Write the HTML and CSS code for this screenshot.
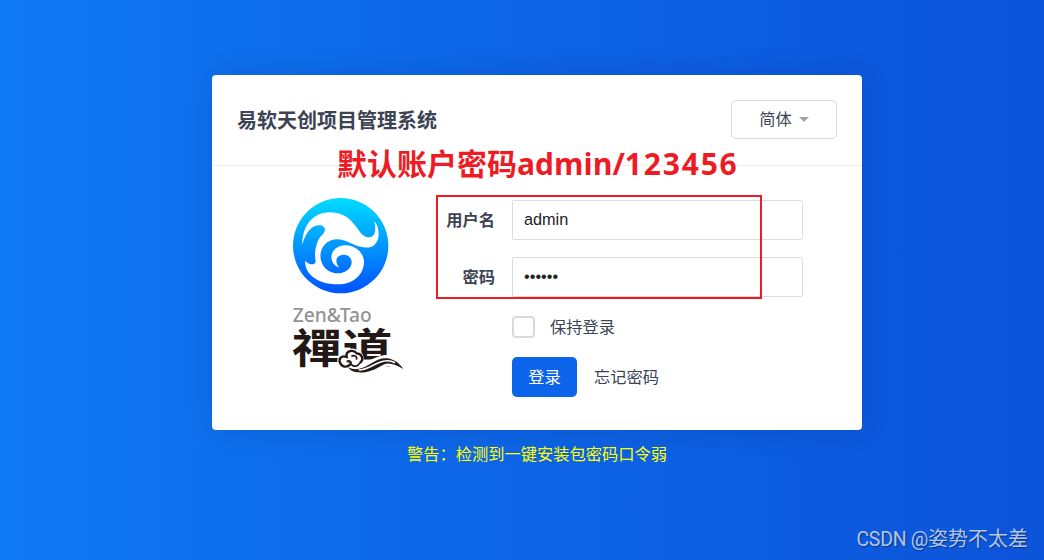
FILE: index.html
```
<!DOCTYPE html>
<html lang="zh-CN">
<head>
	<meta charset="utf-8">
	<title>用户登录</title>
	<link rel="stylesheet" href="styles.css">
</head>
<body>
	<div class="container">
		<div class="login-panel">
			<header>
				<h2>易软天创项目管理系统</h2>
				<button class="lang" type="button">简体<span class="caret"></span></button>
			</header>
			<div class="content">
				<svg class="logo" viewBox="0 0 390 570">
					<defs>
						<linearGradient id="sky" x1="0" y1="0" x2="0" y2="1">
							<stop offset="0" stop-color="#00dcff"/>
							<stop offset="1" stop-color="#0052ff"/>
						</linearGradient>
					</defs>
					<circle cx="182" cy="167" r="143" fill="url(#sky)"/>
					<path fill="#fff" d="M67 165C66 112 95 68 148 67C194 66 216 92 235 119C248 138 259 144 272 141C289 136 287 114 283 93C297 108 303 145 284 164C268 180 238 171 216 161C190 149 165 140 142 157C119 175 116 203 129 226C144 251 180 258 203 240C223 224 217 196 193 194C170 193 161 214 178 233C149 224 145 185 174 171C208 155 252 179 252 216C251 255 219 283 174 283C120 283 75 258 75 212C88 225 106 228 107 213C102 190 107 151 129 132C141 119 133 105 116 106C91 108 75 133 67 165Z"/>
					<text class="brand-en" x="38" y="396" textLength="237" lengthAdjust="spacingAndGlyphs">Zen&amp;Tao</text>
					<text class="brand-zh" transform="translate(36 520) scale(1 .82)" textLength="302" lengthAdjust="spacingAndGlyphs">禪道</text>
					<!-- cloud with its trailing wisp -->
					<path fill="#fff" stroke="#fff" stroke-width="14" d="M180 520C175 502 187 496 200 501C196 482 220 477 230 490C246 491 247 510 239 519C264 529 285 505 315 502C340 502 356 515 369 535C340 522 325 517 306 528C275 548 229 551 207 534C194 536 184 531 180 520Z"/>
					<path fill="#fff" stroke="#231815" stroke-width="7" d="M239 519C255 508 244 490 230 490C220 477 196 482 200 501C184 495 175 506 180 518C184 531 200 534 210 524C216 516 207 510 201 516"/>
					<path fill="none" stroke="#231815" stroke-width="5" d="M214 499C223 493 233 500 229 509M213 522C220 533 235 529 239 519"/>
					<path fill="#231815" d="M205 532C224 542 247 538 269 523C292 507 310 502 329 506C348 511 361 523 370 537C346 523 327 516 310 524C285 539 260 550 232 547C219 546 209 541 205 532Z"/>
					<path fill="none" stroke="#fff" stroke-width="5" d="M236 540C267 540 284 517 314 513C326 511 337 514 345 518"/>
				</svg>
				<form class="form">
					<label for="account">用户名</label>
					<input type="text" id="account" value="admin">
					<label for="password">密码</label>
					<input type="password" id="password" value="123456">
					<div class="keep">
						<input type="checkbox" id="keepLogin">
						<label for="keepLogin">保持登录</label>
					</div>
					<div class="actions">
						<button class="submit" type="button">登录</button>
						<a>忘记密码</a>
					</div>
				</form>
			</div>
		</div>
		<p class="warning">警告：检测到一键安装包密码口令弱</p>
	</div>
	<div class="note">默认账户密码<span>admin/</span><span class="digits">123456</span></div>
	<div class="highlight"></div>
	<div class="watermark"><span>CSDN @</span>姿势不太差</div>
</body>
</html>
```
FILE: styles.css
```
* {
	box-sizing: border-box;
}
body {
	margin: 0;
	height: 560px;
	position: relative;
	overflow: hidden;
	font-family: "Liberation Sans", "Noto Sans CJK SC", sans-serif;
	font-size: 16.25px;
	line-height: 24px;
	color: #3c4353;
	background: linear-gradient(90deg, #0f78f4 0%, #0d64e6 50%, #0c54da 100%);
}
.container {
	width: 650px;
	margin-left: 212px;
	padding-top: 75px;
}
.login-panel {
	height: 355px;
	background-color: #fff;
	border-radius: 4px;
	box-shadow: 0 0 30px rgba(0, 0, 0, 0.12);
}
header {
	display: flex;
	align-items: center;
	justify-content: space-between;
	height: 91px;
	padding: 0 25px 2px;
	border-bottom: 1px solid #eee;
}
h2 {
	margin: 0;
	padding-top: 3px;
	font-size: 20px;
	font-weight: bold;
}
button {
	display: flex;
	align-items: center;
	justify-content: center;
	padding: 0;
	font: inherit;
	border-radius: 5px;
}
.lang {
	width: 106px;
	height: 39px;
	gap: 7px;
	color: #3c4353;
	background-color: #fff;
	border: 1px solid #d8dbe2;
}
.caret {
	border: 5px solid transparent;
	border-top-color: #9ea3ad;
	border-bottom: 0;
}
.content {
	display: flex;
	padding: 24px 0 0 68px;
}
.logo {
	width: 130px;
	height: 190px;
}
.brand-en {
	font-family: "Noto Sans", sans-serif;
	font-size: 60px;
	font-weight: 500;
	fill: #929292;
}
.brand-zh {
	font-family: "Noto Sans CJK TC", sans-serif;
	font-size: 151px;
	font-weight: bold;
	fill: #231815;
}
.form {
	display: grid;
	grid-template-columns: 85px 291px;
	grid-template-rows: 40px 40px 26px 40px;
	column-gap: 17px;
	row-gap: 17px;
	align-items: center;
	align-content: start;
	padding-top: 10px;
}
.form > label {
	text-align: right;
	font-weight: bold;
}
input[type="text"],
input[type="password"] {
	width: 291px;
	height: 40px;
	margin: 0;
	padding: 0 11px 2px;
	font: inherit;
	color: #222;
	border: 1px solid #dcdcdc;
	border-radius: 2px;
	outline: none;
}
.keep,
.actions {
	grid-column: 2;
	display: flex;
	align-items: center;
}
.keep {
	gap: 15px;
}
input[type="checkbox"] {
	appearance: none;
	width: 23px;
	height: 22px;
	margin: 0;
	border: 2px solid #d9d9d9;
	border-radius: 4px;
}
.actions {
	gap: 17px;
}
.submit {
	width: 65px;
	height: 40px;
	color: #fff;
	background-color: #0c64eb;
	border: none;
}
.warning {
	margin: 12px 0 0;
	text-align: center;
	color: #ff0;
}
.note {
	position: absolute;
	left: 337px;
	top: 144px;
	font-size: 30px;
	line-height: 40px;
	font-weight: bold;
	white-space: nowrap;
	color: #ed1c24;
}
.note span {
	font-family: "Open Sans", sans-serif;
}
.note .digits {
	letter-spacing: 1.8px;
}
.highlight {
	position: absolute;
	left: 436px;
	top: 195px;
	width: 326px;
	height: 104px;
	border: 2px solid #ed1c24;
	pointer-events: none;
}
.watermark {
	position: absolute;
	right: 16px;
	bottom: 8px;
	font-size: 20px;
	white-space: nowrap;
	color: rgba(255, 255, 255, 0.7);
	text-shadow: 1px 1px 1px rgba(0, 0, 0, 0.4);
}
.watermark span {
	font-family: Roboto, sans-serif;
	font-size: 19.5px;
	letter-spacing: -0.3px;
}
```
